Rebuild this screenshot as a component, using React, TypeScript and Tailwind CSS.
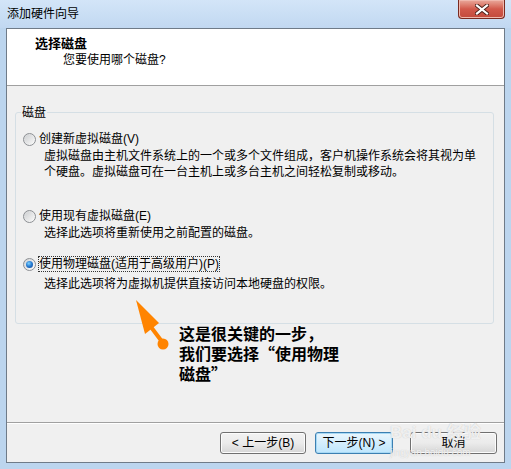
import type { ReactNode } from "react";

function Radio({ checked = false }: { checked?: boolean }) {
  return (
    <span className="flex h-[13px] w-[13px] shrink-0 items-center justify-center rounded-full border border-[#8c8f93] bg-gradient-to-br from-[#d2d4d6] to-[#fdfdfd]">
      {checked ? (
        <span className="h-[7px] w-[7px] rounded-full bg-[radial-gradient(circle_at_40%_35%,#7fd3ff_0%,#2a7fd4_45%,#0d3f8f_100%)]" />
      ) : (
        <span className="h-[9px] w-[9px] rounded-full bg-gradient-to-br from-[#cfd1d3] to-[#f7f7f7]" />
      )}
    </span>
  );
}

function Button({
  children,
  width,
  primary = false,
}: {
  children: ReactNode;
  width: string;
  primary?: boolean;
}) {
  return (
    <button
      type="button"
      className={
        primary
          ? `flex h-[22px] ${width} items-center justify-center rounded-[3px] border border-[#3c7fb1] bg-gradient-to-b from-[#eaf6fd] to-[#bee6fd] leading-[14px] shadow-[inset_0_0_0_1px_#a7d9f5]`
          : `flex h-[22px] ${width} items-center justify-center rounded-[3px] border border-[#707070] bg-gradient-to-b from-[#f2f2f2] via-[#ebebeb] to-[#d6d6d6] leading-[14px] shadow-[inset_0_0_0_1px_#fcfcfc]`
      }
    >
      {children}
    </button>
  );
}

export default function App() {
  return (
    <div className="relative h-[469px] w-[511px] overflow-hidden bg-[#bcd5ee] font-['Liberation_Sans','Noto_Sans_CJK_SC',sans-serif] text-[12px] text-black">
      {/* title bar */}
      <div className="flex h-[28px] items-start justify-between bg-gradient-to-b from-[#d3e5f8] to-[#c1d8f1]">
        <span className="pl-[7px] pt-[6px] leading-[16px]">添加硬件向导</span>
        <div className="mr-[6px] flex h-[19px] w-[47px] items-center justify-center rounded-b-[4px] border border-t-0 border-[#7a2a20] bg-gradient-to-b from-[#e9a99c] via-[#d2594b] to-[#c24a3c] shadow-[inset_0_0_0_1px_#f0b8ad]">
          <svg width="14" height="11" viewBox="0 0 14 11">
            <path d="M2 1.5 L12 9.5 M12 1.5 L2 9.5" stroke="#4a1f18" strokeWidth="4" strokeLinecap="square" />
            <path d="M2 1.5 L12 9.5 M12 1.5 L2 9.5" stroke="#ffffff" strokeWidth="2.2" strokeLinecap="square" />
          </svg>
        </div>
      </div>

      {/* client area */}
      <div className="mx-[6px] flex h-[435px] flex-col border border-[#6f7b88] bg-[#f0f0f0]">
        <div className="h-[57px] border-b border-[#a0a0a0] bg-white">
          <div className="pl-[28px] pt-[7px] text-[13px] font-bold leading-[16px]">选择磁盘</div>
          <div className="pl-[56px] leading-[16px]">您要使用哪个磁盘?</div>
        </div>

        <div className="flex-1 pl-[8px] pr-[10px] pt-[26px]">
          <div className="relative h-[212px] rounded-[3px] border border-[#d5dfe5] pt-[18px]">
            <span className="absolute -top-[8px] left-[5px] bg-[#f0f0f0] px-[1px] leading-[16px]">磁盘</span>

            <div className="flex h-[16px] items-center gap-[3px] pl-[7px]">
              <Radio />
              <span className="leading-[16px]">创建新虚拟磁盘(V)</span>
            </div>
            <div className="mt-[1px] pl-[28px] leading-[16px]">
              <div>虚拟磁盘由主机文件系统上的一个或多个文件组成，客户机操作系统会将其视为单</div>
              <div>个硬盘。虚拟磁盘可在一台主机上或多台主机之间轻松复制或移动。</div>
            </div>

            <div className="mt-[28px] flex h-[16px] items-center gap-[3px] pl-[7px]">
              <Radio />
              <span className="leading-[16px]">使用现有虚拟磁盘(E)</span>
            </div>
            <div className="mt-[1px] pl-[28px] leading-[16px]">选择此选项将重新使用之前配置的磁盘。</div>

            <div className="mt-[15px] flex h-[16px] items-center gap-[3px] pl-[7px]">
              <Radio checked />
              <span className="-ml-[1px] border border-dotted border-[#333] leading-[14px]">
                使用物理磁盘(适用于高级用户)(P)
              </span>
            </div>
            <div className="mt-[4px] pl-[28px] leading-[16px]">选择此选项将为虚拟机提供直接访问本地硬盘的权限。</div>
          </div>
        </div>

        <div className="flex h-[40px] items-start justify-end border-t border-[#a0a0a0] pr-[7px] pt-[9px] shadow-[inset_0_1px_0_#ffffff]">
          <Button width="w-[86px]">&lt; 上一步(B)</Button>
          <div className="ml-[9px]">
            <Button width="w-[78px]" primary>
              下一步(N) &gt;
            </Button>
          </div>
          <div className="ml-[17px]">
            <Button width="w-[87px]">取消</Button>
          </div>
        </div>
      </div>

      {/* annotation arrow */}
      <svg className="pointer-events-none absolute left-0 top-0" width="511" height="469" viewBox="0 0 511 469">
        <path d="M136 300 L159 323 L145 334 Z" fill="#ff8400" />
        <path d="M151 327 L163 343" stroke="#ff8400" strokeWidth="4" strokeLinecap="round" />
        <circle cx="163" cy="344" r="5.5" fill="#ff8400" />
      </svg>

      {/* annotation text */}
      <div className="absolute left-[179px] top-[323px] font-['Noto_Sans_CJK_SC',sans-serif] text-[16px] font-bold leading-[20px]">
        <div>这是很关键的一步，</div>
        <div>我们要选择“使用物理</div>
        <div>磁盘”</div>
      </div>

      {/* watermark */}
      <div className="pointer-events-none absolute left-[390px] top-[423px] whitespace-nowrap text-white/75">
        <div className="text-[17px] font-bold leading-[20px] [text-shadow:0_0_1px_#bdbdbd]">Bai du 经验</div>
        <div className="mt-[4px] text-[10px] leading-[12px] [text-shadow:0_0_1px_#bdbdbd]">jingyan.baidu.com</div>
      </div>
    </div>
  );
}
